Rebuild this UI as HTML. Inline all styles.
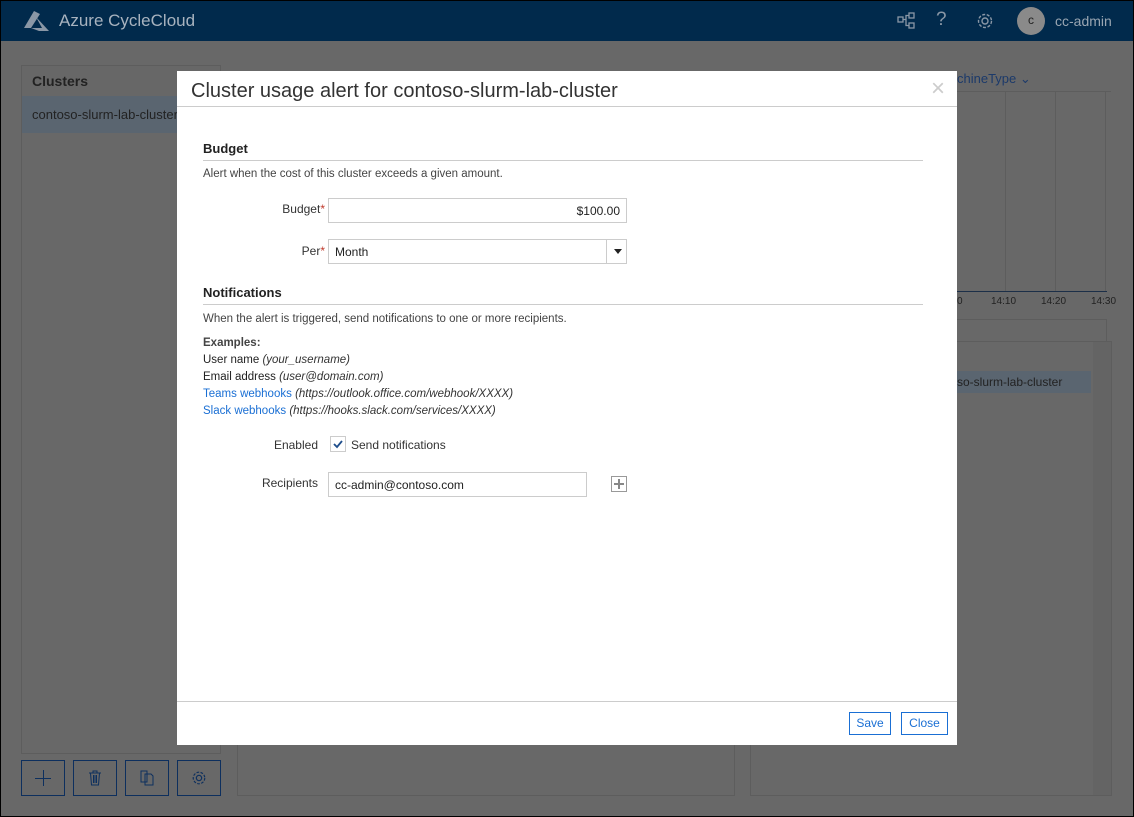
<!DOCTYPE html>
<html><head><style>
*{box-sizing:border-box;margin:0;padding:0}
body{width:1134px;height:817px;overflow:hidden;font-family:"Liberation Sans",sans-serif;background:#000;position:relative}
.frame{position:absolute;left:1px;top:1px;width:1132px;height:815px;background:#686868;overflow:hidden}
.hdr{position:absolute;left:0;top:0;width:1132px;height:40px;background:#012a4c;color:#9aa6b2}
.abs{position:absolute}
.modal{position:absolute;left:176px;top:70px;width:780px;height:674px;background:#fff}
.lbl{position:absolute;font-size:12px;color:#333;text-align:right}
.inp{position:absolute;border:1px solid #ccc;height:25px;font-size:12px;color:#222;padding:5px 6px}
.req{color:#c0392b}
a{color:#1a6fd4;text-decoration:none}
i{color:#333}
.btn{position:absolute;border:1px solid #1a6fd4;color:#1a6fd4;font-size:12px;text-align:center;line-height:21px;height:23px}
.bb{position:absolute;top:759px;width:44px;height:36px;border:1px solid #0d2f5e}
</style></head><body>
<div class="frame">
<div class="hdr">
 <svg class="abs" style="left:20px;top:10px" width="30" height="20" viewBox="0 0 30 20"><path d="M13 0 L3 17 L10 17 L19 3 Z M15 6 L21 17 L10 17 L18 20 L28 20 Z" fill="#8a97a6"/></svg>
 <div class="abs" style="left:58px;top:10px;font-size:17px;color:#a8b3bf">Azure CycleCloud</div>
 <svg class="abs" style="left:896px;top:11px" width="20" height="18" viewBox="0 0 20 18" fill="none" stroke="#8a97a6" stroke-width="1.3"><rect x="1" y="5" width="5" height="5"/><rect x="12" y="1" width="5" height="5"/><rect x="12" y="11" width="5" height="5"/><path d="M6 7.5h3v-4h3M9 7.5v6h3"/></svg>
 <div class="abs" style="left:935px;top:8px;font-size:19px;color:#8a97a6">?</div>
 <svg class="abs" style="left:975px;top:11px" width="18" height="18" viewBox="0 0 18 18" fill="none" stroke="#8a97a6" stroke-width="1.4"><circle cx="9" cy="9" r="3"/><circle cx="9" cy="9" r="6.5" stroke-dasharray="3 1.6"/></svg>
 <div class="abs" style="left:1016px;top:6px;width:28px;height:28px;border-radius:50%;background:#8a8a8a;color:#222;font-size:12px;text-align:center;line-height:27px">c</div>
 <div class="abs" style="left:1054px;top:12px;font-size:14px;color:#9aa6b2">cc-admin</div>
</div>
<div class="abs" style="left:20px;top:64px;width:200px;height:689px;border:1px solid #5d5d5d"></div>
<div class="abs" style="left:21px;top:65px;width:198px;height:30px;background:#676767;font-weight:bold;font-size:14px;color:#222;padding:7px 10px">Clusters</div>
<div class="abs" style="left:21px;top:95px;width:198px;height:37px;background:#5a6570;font-size:13px;color:#222;padding:11px 10px">contoso-slurm-lab-cluster</div>
<div class="bb" style="left:20px"><div class="abs" style="left:13px;top:17px;width:16px;height:1px;background:#0d2f5e"></div><div class="abs" style="left:21px;top:9px;width:1px;height:16px;background:#0d2f5e"></div></div>
<div class="bb" style="left:72px"><svg class="abs" style="left:14px;top:9px" width="14" height="16" viewBox="0 0 14 16" fill="none" stroke="#0d2f5e"><path d="M1 3h12M5 3V1h4v2M2.5 3l1 12h7l1-12M5.5 5v8M7 5v8M8.5 5v8"/></svg></div>
<div class="bb" style="left:124px"><svg class="abs" style="left:14px;top:9px" width="16" height="16" viewBox="0 0 16 16" fill="none" stroke="#0d2f5e"><path d="M1 1h6v11H1zM5 4h6l2 2v9H5z"/></svg></div>
<div class="bb" style="left:176px"><svg class="abs" style="left:13px;top:9px" width="16" height="16" viewBox="0 0 18 18" fill="none" stroke="#0d2f5e" stroke-width="1.3"><circle cx="9" cy="9" r="3"/><circle cx="9" cy="9" r="6.5" stroke-dasharray="3 1.6"/></svg></div>
<div class="abs" style="left:236px;top:740px;width:498px;height:55px;border:1px solid #5d5d5d"></div>
<div class="abs" style="left:749px;top:340px;width:362px;height:455px;border:1px solid #5d5d5d"></div>
<div class="abs" style="left:750px;top:370px;width:340px;height:22px;background:#5a6570;font-size:12px;color:#222;padding:4px 0 0 206px">so-slurm-lab-cluster</div>
<div class="abs" style="left:1092px;top:341px;width:18px;height:453px;background:#646464"></div>
<div class="abs" style="left:760px;top:318px;width:346px;height:23px;border:1px solid #5d5d5d"></div>
<div class="abs" style="left:750px;top:90px;width:360px;height:1px;background:#5d5d5d"></div>
<div class="abs" style="left:956px;top:70px;font-size:13px;color:#1c3a6a">chineType ⌄</div>
<div class="abs" style="left:956px;top:290px;width:150px;height:1px;background:#1c2f48"></div>
<div class="abs" style="left:1104px;top:90px;width:1px;height:200px;background:#5d5d5d"></div>
<div class="abs" style="left:1054px;top:90px;width:1px;height:200px;background:#5d5d5d"></div>
<div class="abs" style="left:1004px;top:90px;width:1px;height:200px;background:#5d5d5d"></div>
<div class="abs" style="left:956px;top:295px;font-size:10px;color:#222;width:150px">0<span style="position:absolute;left:34px">14:10</span><span style="position:absolute;left:84px">14:20</span><span style="position:absolute;left:134px">14:30</span></div>

<div class="modal">
 <div class="abs" style="left:14px;top:9px;font-size:20px;color:#333;font-weight:300">Cluster usage alert for contoso-slurm-lab-cluster</div>
 <div class="abs" style="left:754px;top:4px;font-size:24px;color:#ccc">×</div>
 <div class="abs" style="left:0;top:35px;width:780px;height:1px;background:#ccc"></div>
 <div class="abs" style="left:26px;top:70px;font-weight:bold;font-size:13px;color:#222">Budget</div>
 <div class="abs" style="left:26px;top:89px;width:720px;height:1px;background:#ccc"></div>
 <div class="abs" style="left:26px;top:97px;font-size:11.5px;color:#444">Alert when the cost of this cluster exceeds a given amount.</div>
 <div class="lbl" style="left:60px;top:131px;width:88px">Budget<span class="req">*</span></div>
 <div class="inp" style="left:151px;top:127px;width:299px;text-align:right">$100.00</div>
 <div class="lbl" style="left:60px;top:173px;width:88px">Per<span class="req">*</span></div>
 <div class="inp" style="left:151px;top:168px;width:299px">Month<div class="abs" style="left:277px;top:0;width:1px;height:23px;background:#ccc"></div><div class="abs" style="left:285px;top:9px;border:4px solid transparent;border-top:5px solid #222;border-bottom:0"></div></div>
 <div class="abs" style="left:26px;top:214px;font-weight:bold;font-size:13px;color:#222">Notifications</div>
 <div class="abs" style="left:26px;top:233px;width:720px;height:1px;background:#ccc"></div>
 <div class="abs" style="left:26px;top:242px;font-size:11.5px;color:#444">When the alert is triggered, send notifications to one or more recipients.</div>
 <div class="abs" style="left:26px;top:264px;font-size:11.5px;color:#222;line-height:17px"><b style="color:#444">Examples:</b><br>User name <i>(your_username)</i><br>Email address <i>(user@domain.com)</i><br><a>Teams webhooks</a> <i>(https://outlook.office.com/webhook/XXXX)</i><br><a>Slack webhooks</a> <i>(https://hooks.slack.com/services/XXXX)</i></div>
 <div class="lbl" style="left:60px;top:367px;width:81px">Enabled</div>
 <div class="abs" style="left:153px;top:365px;width:16px;height:16px;border:1px solid #ccc"><svg width="14" height="14" viewBox="0 0 14 14"><path d="M3 7l3 3 5-6" fill="none" stroke="#1f4e8c" stroke-width="1.8"/></svg></div>
 <div class="abs" style="left:174px;top:367px;font-size:12px;color:#333">Send notifications</div>
 <div class="lbl" style="left:60px;top:405px;width:81px">Recipients</div>
 <div class="inp" style="left:151px;top:401px;width:259px">cc-admin@contoso.com</div>
 <div class="abs" style="left:434px;top:405px;width:16px;height:16px;border:1px solid #999"><div class="abs" style="left:2px;top:6px;width:10px;height:2px;background:#888"></div><div class="abs" style="left:6px;top:2px;width:2px;height:10px;background:#888"></div></div>
 <div class="abs" style="left:0;top:630px;width:780px;height:1px;background:#ccc"></div>
 <div class="btn" style="left:672px;top:641px;width:42px">Save</div>
 <div class="btn" style="left:724px;top:641px;width:47px">Close</div>
</div>
</div>
</body></html>
